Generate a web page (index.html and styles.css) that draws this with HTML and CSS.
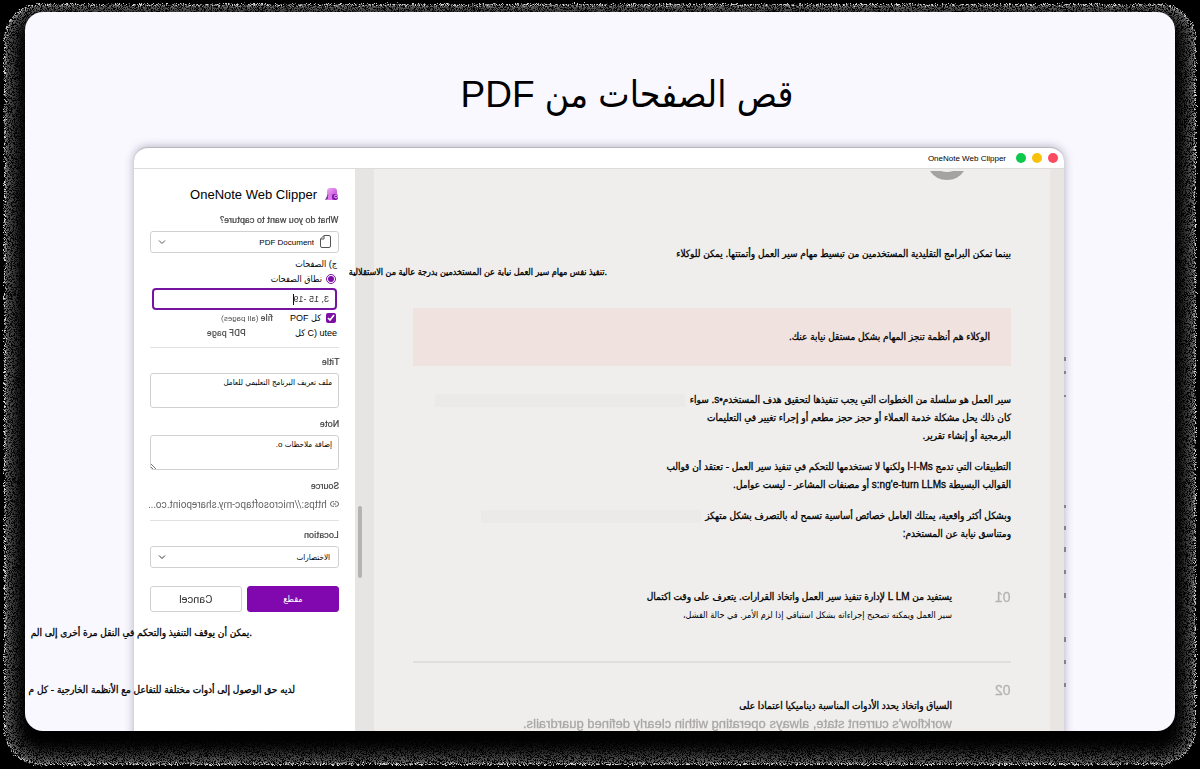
FILE: index.html
```html
<!DOCTYPE html>
<html lang="ar" dir="rtl">
<head>
<meta charset="utf-8">
<title>قص الصفحات من PDF</title>
<link rel="stylesheet" href="styles.css">
</head>
<body>
<svg class="defs" width="0" height="0" aria-hidden="true">
  <filter id="grain" x="0" y="0" width="100%" height="100%" color-interpolation-filters="sRGB">
    <feTurbulence type="fractalNoise" baseFrequency="1.370" numOctaves="2" seed="4" result="n"/>
    <feColorMatrix in="n" type="matrix" values="7 0 0 0 -2.800  7 0 0 0 -2.800  7 0 0 0 -2.800  0 0 0 0 1" result="g"/>
    <feDisplacementMap in="SourceGraphic" in2="n" scale="6" xChannelSelector="G" yChannelSelector="B" result="d"/>
    <feComposite in="d" in2="g" operator="arithmetic" k1="1" k2="0" k3="0" k4="0"/>
  </filter>
</svg>
<div class="halo"><div class="halo-ring"></div></div>
<main class="card">
  <h1 class="headline">قص الصفحات من PDF</h1>
  <section class="window">
    <header class="titlebar">
      <span class="dot red"></span><span class="dot yellow"></span><span class="dot green"></span>
      <span class="titlebar-name" dir="ltr">OneNote Web Clipper</span>
    </header>
    <div class="content">
      <article class="document">
        <svg class="arc" width="36" height="10" viewBox="0 0 36 10"><path d="M1 0Q7 9 18 9Q29 9 35 0H24Q18 2 12 0Z" fill="#a5a3a1"/></svg>
        <p class="intro">بينما تمكن البرامج التقليدية المستخدمين من تبسيط مهام سير العمل وأتمتتها. يمكن للوكلاء</p>
        <p class="callout">الوكلاء هم أنظمة تنجز المهام بشكل مستقل نيابة عنك.</p>
        <p class="smudge">سير العمل هو سلسلة من الخطوات التي يجب تنفيذها لتحقيق هدف المستخدم•s. سواء<br>كان ذلك يحل مشكلة خدمة العملاء أو حجز حجز مطعم أو إجراء تغيير في التعليمات<br>البرمجية أو إنشاء تقرير.</p>
        <p>التطبيقات التي تدمج I-I-Ms ولكنها لا تستخدمها للتحكم في تنفيذ سير العمل - تعتقد أن قوالب<br>القوالب البسيطة s:ng'e-turn LLMs أو مصنفات المشاعر - ليست عوامل.</p>
        <p class="smudge short">وبشكل أكثر واقعية، يمتلك العامل خصائص أساسية تسمح له بالتصرف بشكل متهكز<br>ومتناسق نيابة عن المستخدم:</p>
        <div class="point first">
          <span class="number"><span class="mirror">01</span></span>
          <div>
            <p>يستفيد من L LM لإدارة تنفيذ سير العمل واتخاذ القرارات. يتعرف على وقت اكتمال</p>
            <p class="light">سير العمل ويمكنه تصحيح إجراءاته بشكل استباقي إذا لزم الأمر. في حالة الفشل،</p>
          </div>
        </div>
        <div class="point second">
          <span class="number"><span class="mirror">02</span></span>
          <div>
            <p class="lead">السياق واتخاذ يحدد الأدوات المناسبة ديناميكيا اعتمادا على</p>
            <p class="faded"><span class="mirror" dir="ltr">workflow's current state, always operating within clearly defined guardrails.</span></p>
          </div>
        </div>
      </article>
      <form class="clipper">
        <h2 class="brand">
          <svg width="14" height="14" viewBox="0 0 14 14"><defs><linearGradient id="b" x2="1" y2="1"><stop stop-color="#f3a6f5"/><stop offset="1" stop-color="#bd3fd6"/></linearGradient></defs><rect x="2" y="1" width="10" height="11" rx="3" fill="url(#b)"/><path d="M0 13L3 7L5 12Z" fill="#7d3b98"/><path d="M3 8L8 10V13H3Z" fill="#e07bef"/><rect x="7" y="7" width="6" height="6" rx="2" fill="#8517ad"/><circle cx="11" cy="9.500" r="1.500" fill="none" stroke="#e9b5f5"/></svg>
          <span dir="ltr">OneNote Web Clipper</span>
        </h2>
        <label class="caption" for="kind"><span class="mirror" dir="ltr">What do you want to capture?</span></label>
        <div class="picker">
          <select id="kind" class="with-icon"><option>PDF Document</option></select>
          <svg class="page-icon" width="11" height="13" viewBox="0 0 11 13" fill="none" stroke="#555"><path d="M4 .5H9Q10.500 .5 10.500 2V11Q10.500 12.500 9 12.500H2Q.5 12.500 .5 11V4ZM4 .5V4H.5"/></svg>
          <svg class="chevron" width="8" height="6" viewBox="0 0 8 6" fill="none" stroke="#555"><path d="M1 1.500L4 4.500L7 1.500"/></svg>
        </div>
        <p class="row pages">ج) الصفحات</p>
        <label class="row scope"><input type="radio" name="scope" checked><span>نطاق الصفحات</span></label>
        <div class="range"><input type="text" aria-label="نطاق الصفحات" dir="ltr" value="3, 15 -19"><i class="caret"></i></div>
        <label class="row check"><input type="checkbox" checked><span>كل POF</span><b class="mirror" dir="ltr">file <small>(all pages)</small></b></label>
        <p class="row last"><span dir="ltr">كل C) utee</span><b class="mirror" dir="ltr">PDF page</b></p>
        <hr>
        <label class="caption" for="title"><span class="mirror" dir="ltr">Title</span></label>
        <textarea id="title" class="plain">ملف تعريف البرنامج التعليمي للعامل</textarea>
        <label class="caption" for="note"><span class="mirror" dir="ltr">Note</span></label>
        <div class="picker note"><textarea id="note">إضافة ملاحظات o.</textarea><svg class="grip" width="6" height="6" viewBox="0 0 6 6" stroke="#777"><path d="M0 1L5 6M0 4L2 6"/></svg></div>
        <span class="caption source"><span class="mirror" dir="ltr">Source</span></span>
        <a class="link" href="#source"><svg width="9" height="6" viewBox="0 0 9 6" fill="none" stroke="#666"><path d="M4 .7H2.500A2 2.300 0 0 0 2.500 5.300H4M5 .7H6.500A2 2.300 0 0 1 6.500 5.300H5M3 3H6"/></svg><span class="mirror" dir="ltr">https://microsoftapc-my.sharepoint.co...</span></a>
        <hr>
        <label class="caption" for="place"><span class="mirror" dir="ltr">Location</span></label>
        <div class="picker">
          <select id="place"><option>الاختصارات</option></select>
          <svg class="chevron" width="8" height="6" viewBox="0 0 8 6" fill="none" stroke="#333"><path d="M1 1.500L4 4.500L7 1.500"/></svg>
        </div>
        <div class="actions">
          <button type="button" class="primary">مقطع</button>
          <button type="button"><span class="mirror" dir="ltr">Cancel</span></button>
        </div>
      </form>
      <i class="thumb"></i>
    </div>
  </section>
  <svg class="ticks" width="2" height="334" viewBox="0 0 2 334" stroke="#85828c" stroke-width="2"><path d="M1 0v4M1 14v3M1 38v2M1 148v3M1 169v4M1 190v5M1 213v4M1 236v5M1 280v5M1 303v4M1 326v4"/></svg>
  <p class="stray stray-one" dir="ltr">تنفيذ نفس مهام سير العمل نيابة عن المستخدمين بدرجة عالية من الاستقلالية.</p>
  <p class="stray stray-two" dir="ltr">يمكن أن يوقف التنفيذ والتحكم في النقل مرة أخرى إلى الم.</p>
  <p class="stray stray-three" dir="rtl">لديه حق الوصول إلى أدوات مختلفة للتفاعل مع الأنظمة الخارجية - كل م</p>
</main>
</body>
</html>
```
FILE: styles.css
```css
* { box-sizing: border-box; }

body {
  margin: 0;
  height: 100vh;
  padding: 12px 25px 38px;
  background: #000;
  color: #000;
  font-family: "Liberation Sans", "DejaVu Sans Condensed", "DejaVu Sans", sans-serif;
  font-size: 10px;
  overflow: hidden;
}

h1, h2, p { margin: 0; font-weight: 400; }
.defs { position: absolute; }
.mirror { display: inline-block; transform: scaleX(-1); }

.halo {
  position: absolute;
  inset: 0;
  padding: 4px;
  filter: url(#grain);
}
.halo-ring {
  height: 100%;
  border-radius: 36px;
  background: #000;
  box-shadow: inset 0 0 2px 1px #fff, inset 0 0 18px 8px rgba(255, 255, 255, .5);
}

.card {
  position: relative;
  height: 100%;
  border-radius: 18px;
  background: #f9f8ff;
  overflow: hidden;
}
.headline {
  height: 135px;
  padding: 57px 0 0 54px;
  font-size: 37px;
  line-height: 52px;
  text-align: center;
}

.window {
  height: 700px;
  margin: 0 111px 0 109px;
  border-top: 1px solid #b9b8bf;
  border-radius: 14px;
  background: #fff;
  overflow: hidden;
  box-shadow: 0 0 10px rgba(60, 55, 80, .4);
}
.titlebar {
  display: flex;
  align-items: center;
  gap: 6px;
  height: 21px;
  padding: 0 6px;
  border-bottom: 1px solid #dddcdb;
}
.dot { width: 10px; height: 10px; border-radius: 50%; }
.red { background: #fb4b60; }
.yellow { background: #f9c20a; }
.green { background: #0cc94c; }
.titlebar-name { margin-right: 4px; font-size: 8px; }

.content { position: relative; display: flex; height: 678px; }
.document {
  flex: 1;
  min-width: 0;
  border-right: 14px solid #e8e5e3;
  border-left: 19px solid #e6e5e4;
  padding: 2px 39px 0;
  background: #efeeec;
  line-height: 18px;
  white-space: nowrap;
  -webkit-text-stroke: 0.3px #000;
}
.document > p { margin-bottom: 13px; }
.arc { display: block; margin: 0 46px 64px 0; }
.document > .intro { margin-bottom: 45px; }
.document > .callout {
  margin-bottom: 25px;
  padding: 20px 21px;
  background: #f0e2df;
}
.smudge {
  background: linear-gradient(#ebeae8, #ebeae8) left 22px top 3px / 250px 13px no-repeat;
}
.short { background-position: left 68px top 3px; background-size: 220px 13px; }
.point { display: flex; }
.number {
  width: 59px;
  color: #b5b3b1;
  font-size: 14px;
  -webkit-text-stroke: 0.3px #b5b3b1;
}
.first { margin-top: 45px; padding-bottom: 37px; border-bottom: 2px solid #dfdedc; }
.second { padding-top: 18px; }
.light { -webkit-text-stroke: 0; font-size: 9px; }
.lead { padding-top: 16px; }
.faded {
  color: #a9a7a5;
  font-size: 13px;
  -webkit-text-stroke: 0.3px #a9a7a5;
}

.clipper {
  width: 221px;
  padding: 16px 16px 0;
  display: flex;
  flex-direction: column;
  font-size: 9px;
}
.clipper .mirror { font-family: Roboto, "Liberation Sans", sans-serif; }
.brand {
  display: flex;
  align-items: center;
  gap: 8px;
  height: 18px;
  margin-bottom: 11px;
  font-size: 13px;
}
.caption {
  height: 12px;
  margin-bottom: 5px;
  color: #444;
  font-size: 9px;
  line-height: 12px;
  -webkit-text-stroke: 0.2px #444;
}
.picker { position: relative; height: 22px; }
select, textarea, button, .range input {
  width: 100%;
  height: 100%;
  margin: 0;
  border: 1px solid #d2d1d1;
  border-radius: 3px;
  background: #fff;
  color: #000;
  font: inherit;
}
select { appearance: none; padding: 0 8px; font-size: 8px; }
.with-icon { padding-right: 24px; }
.page-icon { position: absolute; right: 8px; top: 4px; }
.chevron { position: absolute; left: 8px; top: 8px; }
.row {
  display: flex;
  align-items: center;
  gap: 5px;
  height: 15px;
}
.pages { margin-top: 3px; padding-right: 2px; }
.row input {
  width: 10px;
  height: 10px;
  margin: 0 3px 0 0;
  accent-color: #7c10a5;
}
.scope { gap: 4px; }
.range { position: relative; height: 22px; padding: 0 2px; margin: 2px 0 0; }
.range input {
  border: 2px solid #7514a0;
  border-radius: 4px;
  padding: 0 6px;
  color: #333;
  transform: scaleX(-1);
  outline: none;
}
.caret { position: absolute; right: 45px; top: 6px; width: 1px; height: 11px; background: #111; }
.row b { margin-right: 12px; color: #555; font-weight: 500; }
.row small { font-size: 8px; font-weight: 400; }
.last { padding-right: 2px; }
.last b { margin-right: 44px; }
hr { width: 100%; height: 1px; margin: 7px 0 8px; border: 0; background: #e3e2e2; }
textarea {
  display: block;
  height: 35px;
  padding: 4px 6px;
  font-size: 8px;
  resize: none;
  overflow: hidden;
}
.plain { margin-bottom: 10px; }
.note { height: 35px; margin-bottom: 10px; }
.grip { position: absolute; left: 1px; bottom: 1px; }
.link {
  display: flex;
  align-items: center;
  gap: 3px;
  height: 14px;
  color: #666;
  font-size: 10px;
  text-decoration: none;
  white-space: nowrap;
}
.link svg { flex: none; }
.link + hr { margin-top: 9px; }
.actions { display: flex; gap: 5px; height: 26px; margin-top: 18px; }
.actions button { flex: 1; font-size: 11px; color: #333; }
.actions .primary { border-color: #8008ae; background: #8008ae; color: #fff; font-size: 9px; }

.thumb {
  position: absolute;
  left: 224px;
  top: 337px;
  width: 4px;
  height: 72px;
  border-radius: 2px;
  background: #b4b3b2;
}
.ticks { position: absolute; right: 109px; top: 345px; }
.stray {
  position: absolute;
  line-height: 18px;
  white-space: nowrap;
  -webkit-text-stroke: 0.3px #000;
}
.stray-one { right: 568px; top: 251px; font-size: 9px; }
.stray-two { right: 923px; top: 612px; }
.stray-three { right: 880px; top: 669px; }
```
